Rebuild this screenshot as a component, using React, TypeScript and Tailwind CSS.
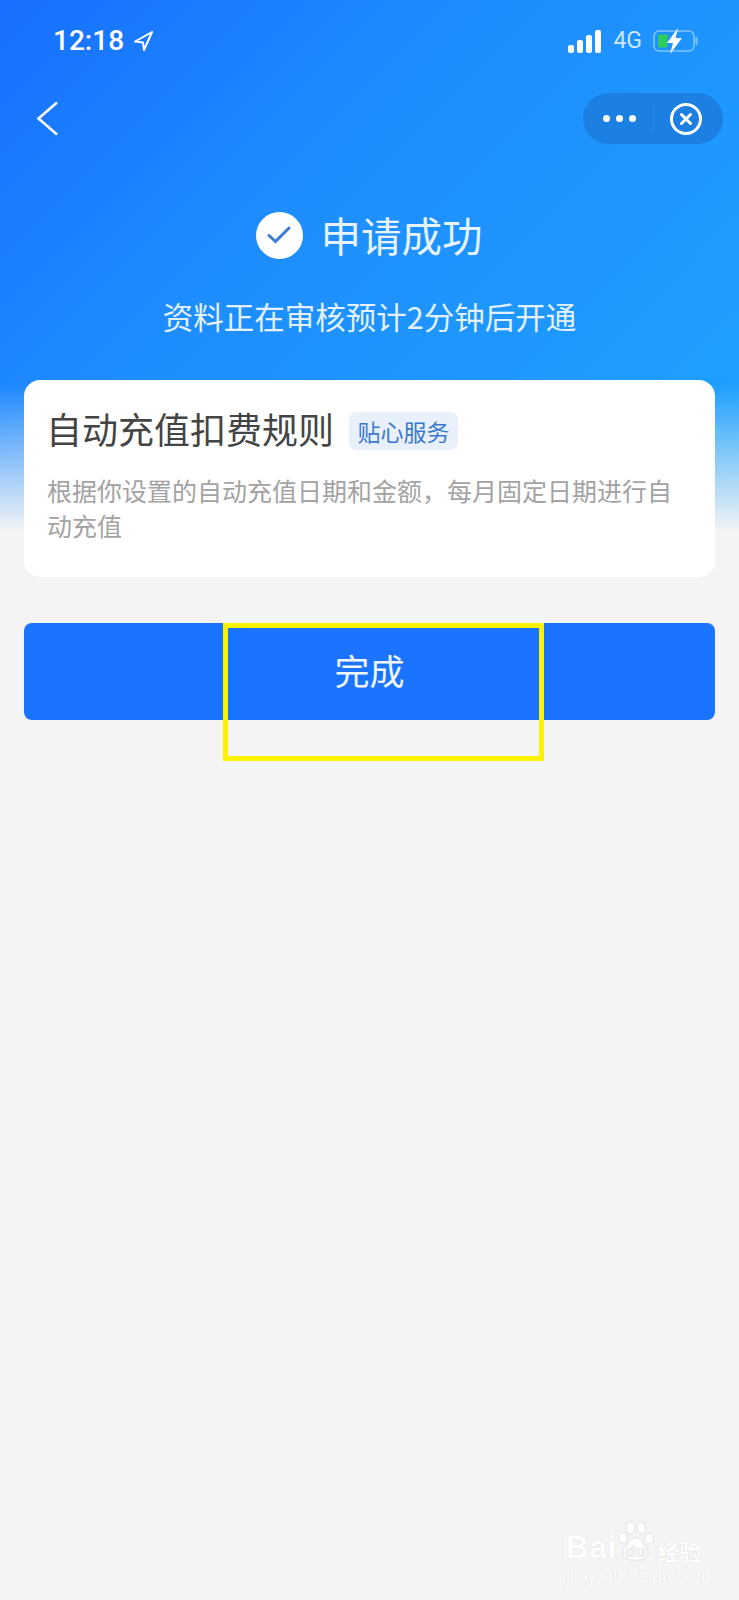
const cjk = "font-['Noto_Sans_CJK_SC','Noto_Sans',sans-serif]";

function Signal() {
  return (
    <svg width="34" height="23" viewBox="0 0 34 23" fill="#fff">
      <rect x="0" y="15" width="6" height="8" rx="2" />
      <rect x="9" y="10" width="6" height="13" rx="2" />
      <rect x="18" y="5" width="6" height="18" rx="2" />
      <rect x="27" y="0" width="6" height="23" rx="2" />
    </svg>
  );
}

function Battery() {
  return (
    <svg width="46" height="26" viewBox="0 0 46 26" fill="none">
      <rect x="1" y="3" width="40" height="20" rx="5" stroke="#7fc4fb" strokeWidth="1.600" />
      <path d="M43.500 10v6" stroke="#7fc4fb" strokeWidth="2" strokeLinecap="round" />
      <path d="M5 6.500h10l-1 13H5z" fill="#2ecc5a" />
      <path d="M25 0 14 15h6l-3 11 12-16h-6.500z" fill="#fff" />
    </svg>
  );
}

function Capsule() {
  return (
    <div className="flex h-[51px] w-[140px] items-center rounded-full bg-[#1c7fe2]">
      <div className="flex flex-1 items-center justify-center gap-[6px] pl-[2px]">
        <span className="h-[7px] w-[7px] rounded-full bg-white" />
        <span className="h-[7px] w-[7px] rounded-full bg-white" />
        <span className="h-[7px] w-[7px] rounded-full bg-white" />
      </div>
      <div className="h-[30px] w-px bg-[#2a88e6]" />
      <div className="flex w-[69px] items-center justify-center pr-[6px]">
        <svg width="32" height="32" viewBox="0 0 32 32" fill="none" stroke="#fff">
          <circle cx="16" cy="16" r="14.500" strokeWidth="3" />
          <path d="M11.500 11.500l9 9M20.500 11.500l-9 9" strokeWidth="3" strokeLinecap="round" />
        </svg>
      </div>
    </div>
  );
}

function Watermark() {
  return (
    <div className="absolute left-[566px] top-[1532px] w-[140px] text-white font-['Liberation_Sans',sans-serif] [text-shadow:0_0_1px_#cccccc]">
      <div className="flex items-end">
        <span className="text-[31px] font-bold leading-[32px] tracking-[1px]">Bai</span>
        <span className="relative flex h-[32px] w-[37px] items-end justify-center">
          <svg className="absolute bottom-[1px] left-0" width="37" height="43" viewBox="0 0 38 42" fill="#fff" stroke="#dadada" strokeWidth="0.800">
            <ellipse cx="6" cy="17" rx="4.500" ry="5.500" />
            <ellipse cx="14" cy="7" rx="4.500" ry="6" />
            <ellipse cx="25" cy="7" rx="4.500" ry="6" />
            <ellipse cx="33" cy="18" rx="4.500" ry="5.500" />
            <path d="M19 17c-5 0-7 6-11 10-4 5-2 13 6 13h10c8 0 10-8 6-13-4-4-6-10-11-10z" />
          </svg>
          <span className="relative pb-[2px] text-[17px] font-bold leading-[20px] text-[#f4f4f4] [text-shadow:0_0_1px_#b0b0b0]">du</span>
        </span>
        <span className={`ml-[3px] whitespace-nowrap text-[22px] font-bold leading-[28px] ${cjk}`}>经验</span>
      </div>
      <div className="mt-[2px] whitespace-nowrap text-[18px] leading-[20px]">jingyan.baidu.com</div>
    </div>
  );
}

export default function App() {
  return (
    <div className={`relative h-[1600px] overflow-hidden bg-[#f4f4f4] ${cjk}`}>
      {/* blue header, fades out behind the card */}
      <div className="bg-[linear-gradient(180deg,rgba(244,244,244,0)_385px,#f4f4f4_532px),linear-gradient(135deg,#176fff_0%,#1e8cff_35%,#1ea6ff_100%)] pb-[24px]">
        {/* status bar */}
        <div className="flex h-[93px] items-start justify-between pl-[53px] pr-[40px] pt-[27px]">
          <div className="flex items-center gap-[10px] text-white">
            <span className="font-['Roboto',sans-serif] text-[28px] font-medium leading-[28px]">12:18</span>
            <svg width="19" height="20" viewBox="0 0 19 20" fill="none" stroke="#fff" strokeWidth="2" strokeLinejoin="round">
              <path d="M18 1 1 10.500l8 1 1 7.500z" />
            </svg>
          </div>
          <div className="flex items-center gap-[11px]">
            <Signal />
            <span className="font-['Roboto',sans-serif] text-[23px] leading-[28px] text-[#cfe6ff]">4G</span>
            <Battery />
          </div>
        </div>

        {/* nav */}
        <div className="flex h-[51px] items-center justify-between pl-[36px] pr-[16px]">
          <svg width="22" height="35" viewBox="0 0 22 35" fill="none" stroke="#fff" strokeWidth="2.500">
            <path d="M21 1.500 2.500 17.500 21 33.500" />
          </svg>
          <Capsule />
        </div>

        {/* result */}
        <div className="mt-[67px] flex items-center justify-center gap-[18px] pr-[1px]">
          <div className="flex h-[47px] w-[47px] items-center justify-center rounded-full bg-white">
            <svg width="24" height="18" viewBox="0 0 24 18" fill="none" stroke="#3a7bd5" strokeWidth="3" strokeLinecap="round">
              <path d="M2 9.500l6.500 6L22 2" />
            </svg>
          </div>
          <h1 className="text-[40.500px] font-normal leading-[48px] text-[#e6f3ff]">申请成功</h1>
        </div>
        <p className="mt-[35px] text-center text-[30.500px] leading-[44px] text-[#e3f1ff]">资料正在审核预计2分钟后开通</p>

        {/* rule card */}
        <div className="mx-[24px] mt-[42px] h-[197px] rounded-[16px] bg-white pl-[24px] pr-[40px] pt-[26px]">
          <div className="-ml-[2px] flex items-center gap-[15px]">
            <h2 className="text-[36px] font-normal leading-[38px] text-[#444444]">自动充值扣费规则</h2>
            <span className="mt-[6px] flex h-[38px] w-[109px] items-center justify-center rounded-[8px] bg-[#e8f0fb] text-[23px] text-[#3c78d0]">贴心服务</span>
          </div>
          <p className="mt-[23px] -ml-[1px] text-[25px] leading-[35px] text-[#a3a3a3]">根据你设置的自动充值日期和金额，每月固定日期进行自动充值</p>
        </div>
      </div>

      <div className="px-[24px] pt-[22px]">
        <button className="flex h-[97px] w-full items-center justify-center rounded-[8px] bg-[#1b74ff] pb-[2px] text-[35px] text-[#f0f6ff]">完成</button>
      </div>

      {/* yellow annotation */}
      <div className="absolute left-[223px] top-[623px] h-[138px] w-[321px] border-[5px] border-[#fff200]" />
      <Watermark />
    </div>
  );
}
